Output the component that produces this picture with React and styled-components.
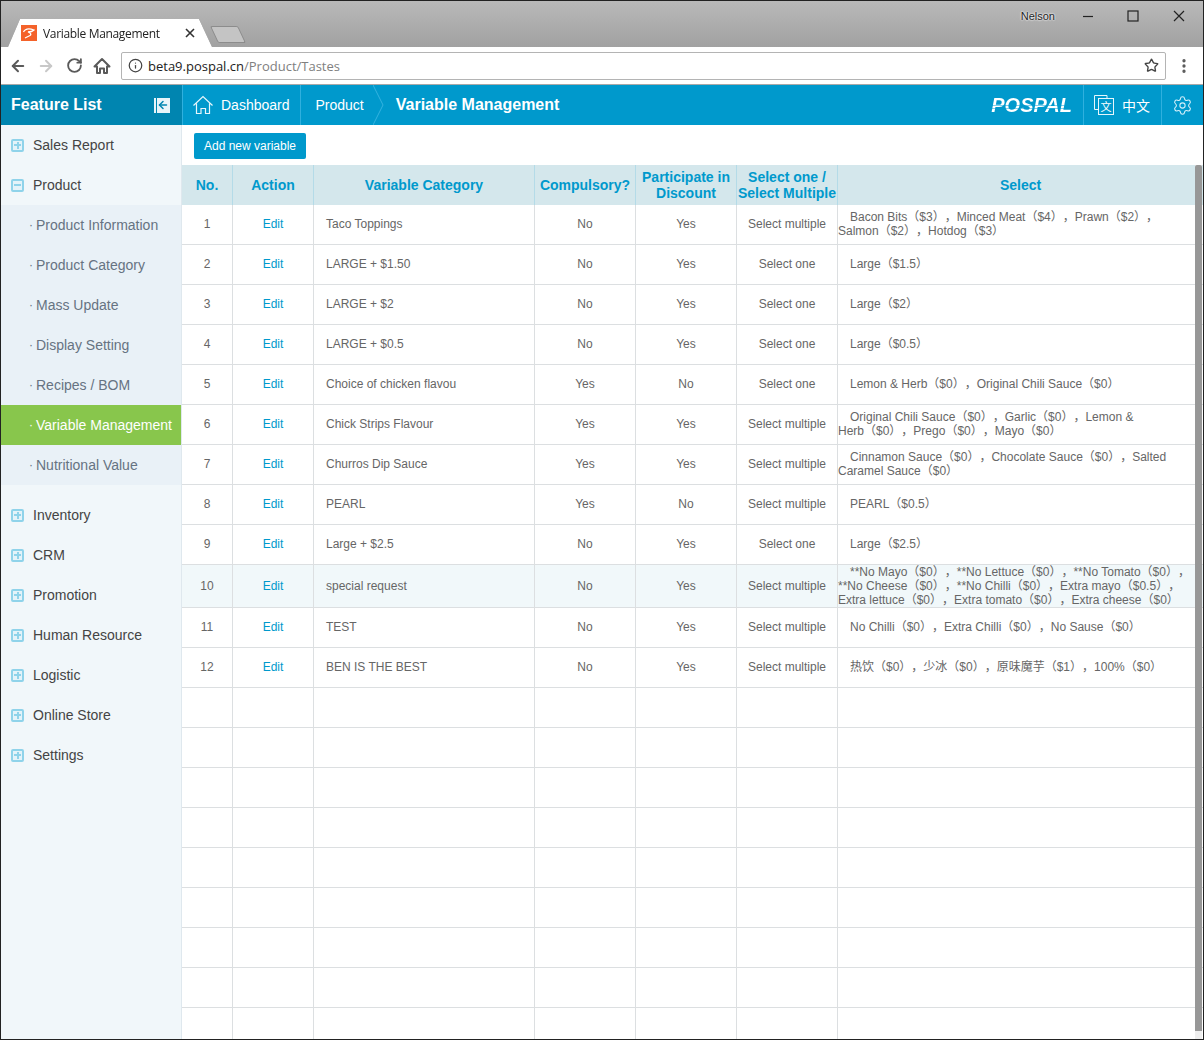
import React from 'react';
import styled, { createGlobalStyle } from 'styled-components';
import { ArrowLeft, ArrowRight, RotateCw, Info, Star, EllipsisVertical, Settings, ArrowLeft as BackArrow } from 'lucide-react';

const GlobalStyle = createGlobalStyle`
  html, body { margin: 0; padding: 0; background: #fff; }
  body { font-family: "Liberation Sans", "Noto Sans CJK SC", sans-serif; }
  * { box-sizing: border-box; }
`;

const Window = styled.div`
  height: 1040px;
  width: 1204px;
  border: 1px solid #222;
  display: flex;
  flex-direction: column;
  overflow: hidden;
`;

const TitleBar = styled.div`
  height: 46px;
  flex: none;
  background: linear-gradient(#b9b9b9, #a1a1a1);
  display: flex;
  align-items: flex-end;
  padding-left: 7px;
`;

const TabShadow = styled.div`
  filter: drop-shadow(0 0 0.6px #555);
`;

const Tab = styled.div`
  width: 204px;
  height: 28px;
  background: #fff;
  clip-path: polygon(0 100%, 12px 0, 191px 0, 204px 100%);
  display: flex;
  align-items: center;
  padding: 0 17px 0 13px;
  font-family: "Open Sans", sans-serif;
  font-size: 12px;
  color: #222;
  white-space: nowrap;
`;

const Favicon = styled.svg`
  width: 16px;
  height: 16px;
  margin-right: 6px;
  flex: none;
`;

const TabTitle = styled.span`
  flex: 1;
  letter-spacing: -0.33px;
`;

const NewTab = styled.div`
  width: 28px;
  height: 17px;
  margin: 0 0 4px 2px;
  background: #c4c4c4;
  border: 1px solid #8c8c8c;
  transform: skewX(25deg);
  border-radius: 2px;
`;

const WindowUser = styled.div`
  margin-left: auto;
  align-self: flex-start;
  display: flex;
  align-items: center;
  height: 30px;
  font-size: 11px;
  color: #222;
  text-shadow: 0 0 2px #fff, 0 0 2px #fff;
`;

const WindowButton = styled.svg`
  width: 12px;
  height: 12px;
  margin-left: ${p => p.$gap}px;
  margin-right: ${p => p.$end || 0}px;
  stroke: #222;
  stroke-width: 1.2;
  fill: none;
`;

const Toolbar = styled.div`
  height: 38px;
  flex: none;
  background: #fff;
  border-bottom: 1px solid #a8a8a8;
  display: flex;
  align-items: center;
  padding: 0 10px 0 3px;
`;

const NavIcon = styled.span`
  width: 28px;
  display: flex;
  justify-content: center;
  color: ${p => (p.$off ? '#c8c8c8' : '#5a5a5a')};
`;

const AddressBar = styled.div`
  margin-left: 5px;
  width: 1045px;
  height: 28px;
  border: 1px solid #b4b4b4;
  border-radius: 2px;
  display: flex;
  align-items: center;
  padding: 0 6px;
  font-family: "Open Sans", sans-serif;
  font-size: 13px;
  color: #222;
`;

const UrlPath = styled.span`
  color: #808080;
`;

const Url = styled.div`
  flex: 1;
  margin-left: 5px;
`;

const MenuButton = styled.span`
  margin-left: auto;
  display: flex;
  color: #5a5a5a;
`;

const AppHeader = styled.header`
  height: 40px;
  flex: none;
  background: #0099cc;
  color: #fff;
  display: flex;
  align-items: center;
`;

const FeatureTitle = styled.div`
  width: 182px;
  height: 100%;
  background: #0085b0;
  border-right: 1px solid #2fb0de;
  display: flex;
  align-items: center;
  justify-content: space-between;
  padding: 0 12px 0 10px;
  font-size: 16px;
  font-weight: bold;
`;

const CollapseBox = styled.span`
  width: 16px;
  height: 15px;
  background: #e8f4f9;
  border-left: 2px solid #e8f4f9;
  box-shadow: inset 1px 0 0 #0085b0;
  display: flex;
  align-items: center;
  justify-content: center;
  color: #0085b0;
`;

const Crumb = styled.div`
  height: 100%;
  display: flex;
  align-items: center;
  gap: 8px;
  font-size: 14px;
  padding: ${p => p.$pad};
  border-right: ${p => (p.$divider ? '1px solid #2fb0de' : 'none')};
`;

const CrumbChevron = styled.svg`
  width: 12px;
  height: 40px;
  margin-left: -1px;
  stroke: #35b3df;
  fill: none;
`;

const PageTitle = styled.div`
  margin-left: 11px;
  font-size: 16px;
  font-weight: bold;
`;

const Logo = styled.span`
  margin-left: auto;
  margin-right: 11px;
  font-family: "Liberation Sans", sans-serif;
  font-size: 20px;
  line-height: 16px;
  font-weight: bold;
  font-style: italic;
  background: linear-gradient(#fff 0 8px, #7fd0ec 8px 9px, #fff 9px 11px, #7fd0ec 11px 12px, #fff 12px);
  -webkit-background-clip: text;
  background-clip: text;
  color: transparent;
`;

const LangButton = styled.div`
  height: 100%;
  width: 79px;
  border-left: 1px solid #2fb0de;
  border-right: 1px solid #2fb0de;
  display: flex;
  align-items: center;
  gap: 8px;
  padding-left: 10px;
  font-size: 14px;
`;

const GearButton = styled.div`
  width: 41px;
  display: flex;
  justify-content: center;
  color: #d6f0fa;
`;

const Body = styled.div`
  flex: 1;
  display: flex;
  min-height: 0;
`;

const Sidebar = styled.aside`
  width: 181px;
  flex: none;
  background: #f1f7fa;
  border-right: 1px solid #dfe8ee;
`;

const MenuItem = styled.div`
  height: 40px;
  display: flex;
  align-items: center;
  gap: 9px;
  padding-left: 10px;
  margin-top: ${p => (p.$spaced ? '10px' : 0)};
  font-size: 14px;
  color: #444;
`;

const Toggle = styled.span`
  width: 13px;
  height: 13px;
  border: 2px solid #8fd3ea;
  border-radius: 2px;
  background: #e4f3f9;
  position: relative;
  &::before {
    content: '';
    position: absolute;
    left: 1px;
    right: 1px;
    top: 3.5px;
    height: 2px;
    background: #8fd3ea;
  }
  &::after {
    content: '';
    display: ${p => (p.$open ? 'none' : 'block')};
    position: absolute;
    top: 1px;
    bottom: 1px;
    left: 3.5px;
    width: 2px;
    background: #8fd3ea;
  }
`;

const SubMenu = styled.div`
  background: #e9f1f7;
`;

const SubItem = styled.div`
  height: 40px;
  width: ${p => (p.$active ? '180px' : 'auto')};
  display: flex;
  align-items: center;
  padding-left: 28px;
  font-size: 14px;
  white-space: nowrap;
  color: ${p => (p.$active ? '#fff' : '#667382')};
  background: ${p => (p.$active ? '#88c64c' : 'transparent')};
  &::before {
    content: '·';
    margin-right: 3px;
    font-size: 12px;
  }
`;

const Main = styled.main`
  flex: 1;
  min-width: 0;
  position: relative;
  overflow: hidden;
`;

const ActionBar = styled.div`
  height: 40px;
  padding: 8px 0 0 12px;
`;

const AddButton = styled.button`
  width: 112px;
  height: 26px;
  border: none;
  border-radius: 2px;
  background: #0099cc;
  color: #fff;
  font-family: inherit;
  font-size: 12px;
  padding: 0;
`;

const Table = styled.table`
  width: 1021px;
  table-layout: fixed;
  border-collapse: separate;
  border-spacing: 0;
`;

const Th = styled.th`
  height: 40px;
  padding: 0;
  background: #d4e7ec;
  border-right: 1px solid #b4dbe8;
  color: #0099cc;
  font-size: 14px;
  line-height: 16px;
  font-weight: bold;
  white-space: nowrap;
  &:last-child { border-right: none; }
`;

const Tr = styled.tr`
  height: ${p => (p.$tall ? '43px' : '40px')};
  background: ${p => (p.$hover ? '#f1f8fa' : '#fff')};
`;

const Td = styled.td`
  padding: ${p => (p.$left ? '0 0 1px 12px' : '0 0 1px')};
  border-right: 1px solid #dcdfe1;
  border-bottom: 1px solid #dcdfe1;
  color: #666;
  font-size: 12px;
  line-height: 14px;
  text-align: ${p => (p.$left ? 'left' : 'center')};
  &:last-child { border-right: none; }
  ${Tr}[data-tall] > & { padding-bottom: 0; }
`;

const EditLink = styled.a`
  color: #0099cc;
`;

const Options = styled.div`
  text-align: left;
  text-indent: 12px;
  line-height: 14px;
  padding-right: 8px;
  text-spacing-trim: space-all;
  font-family: "Liberation Sans", ${p => (p.$simplified ? '"Noto Sans CJK SC"' : '"Noto Sans CJK KR"')}, sans-serif;
`;

const ScrollTrack = styled.div`
  position: absolute;
  top: 40px;
  bottom: 0;
  right: 1px;
  width: 7px;
  background: #eee;
`;

const ScrollThumb = styled.div`
  height: 866px;
  background: #979797;
  border-radius: 2px 2px 0 0;
`;

const sections = ['Inventory', 'CRM', 'Promotion', 'Human Resource', 'Logistic', 'Online Store', 'Settings'];
const productItems = ['Product Information', 'Product Category', 'Mass Update', 'Display Setting', 'Recipes / BOM', 'Variable Management', 'Nutritional Value'];

const rows = [
  ['Taco Toppings', 'No', 'Yes', 'Select multiple', 'Bacon Bits（$3），Minced Meat（$4），Prawn（$2），Salmon（$2），Hotdog（$3）'],
  ['LARGE + $1.50', 'No', 'Yes', 'Select one', 'Large（$1.5）'],
  ['LARGE + $2', 'No', 'Yes', 'Select one', 'Large（$2）'],
  ['LARGE + $0.5', 'No', 'Yes', 'Select one', 'Large（$0.5）'],
  ['Choice of chicken flavou', 'Yes', 'No', 'Select one', 'Lemon & Herb（$0），Original Chili Sauce（$0）'],
  ['Chick Strips Flavour', 'Yes', 'Yes', 'Select multiple', 'Original Chili Sauce（$0），Garlic（$0），Lemon & Herb（$0），Prego（$0），Mayo（$0）'],
  ['Churros Dip Sauce', 'Yes', 'Yes', 'Select multiple', 'Cinnamon Sauce（$0），Chocolate Sauce（$0），Salted Caramel Sauce（$0）'],
  ['PEARL', 'Yes', 'No', 'Select multiple', 'PEARL（$0.5）'],
  ['Large + $2.5', 'No', 'Yes', 'Select one', 'Large（$2.5）'],
  ['special request', 'No', 'Yes', 'Select multiple', '**No Mayo（$0），**No Lettuce（$0），**No Tomato（$0），**No Cheese（$0），**No Chilli（$0），Extra mayo（$0.5），Extra lettuce（$0），Extra tomato（$0），Extra cheese（$0）'],
  ['TEST', 'No', 'Yes', 'Select multiple', 'No Chilli（$0），Extra Chilli（$0），No Sause（$0）'],
  ['BEN IS THE BEST', 'No', 'Yes', 'Select multiple', '热饮（$0），少冰（$0），原味魔芋（$1），100%（$0）'],
];

const widths = [51, 81, 221, 101, 101, 101, 365];

// keep a name and its price on one line, as the original wraps them
const noBreakPrice = text => text.replace(/（/g, '\u2060（');

const App = () => (
  <Window>
    <GlobalStyle />
    <TitleBar>
      <TabShadow>
        <Tab>
          <Favicon viewBox="0 0 16 16">
            <rect width="16" height="16" fill="#f4622a" />
            <path d="M2.5 7 C4 4 8 3 13 5 C11 7 9 7 7 7 C10 8 11 10 8 11 L4 13" fill="none" stroke="#fff" strokeWidth="1.3" />
          </Favicon>
          <TabTitle>Variable Management</TabTitle>
          <svg width="10" height="10" viewBox="0 0 10 10" stroke="#333" strokeWidth="1.6">
            <path d="M1 1 L9 9 M9 1 L1 9" />
          </svg>
        </Tab>
      </TabShadow>
      <NewTab />
      <WindowUser>
        Nelson
        <WindowButton $gap={27} viewBox="0 0 12 12"><path d="M1 6.5 H11" /></WindowButton>
        <WindowButton $gap={33} viewBox="0 0 12 12"><rect x="1" y="1" width="10" height="10" /></WindowButton>
        <WindowButton $gap={34} $end={18} viewBox="0 0 12 12"><path d="M1 1 L11 11 M11 1 L1 11" /></WindowButton>
      </WindowUser>
    </TitleBar>

    <Toolbar>
      <NavIcon><ArrowLeft size={18} strokeWidth={2.6} /></NavIcon>
      <NavIcon $off><ArrowRight size={18} strokeWidth={2.6} /></NavIcon>
      <NavIcon><RotateCw size={17} strokeWidth={2.6} /></NavIcon>
      <NavIcon>
        <svg width="18" height="18" viewBox="0 0 18 18" fill="none" stroke="currentColor" strokeWidth="2">
          <path d="M1.5 9.5 L9 2 L16.5 9.5 H14 V16 H11 V11.5 H7 V16 H4 V9.5 Z" strokeLinejoin="round" />
        </svg>
      </NavIcon>
      <AddressBar>
        <Info size={15} color="#444" strokeWidth={2} />
        <Url>beta9.pospal.cn<UrlPath>/Product/Tastes</UrlPath></Url>
        <Star size={15} color="#444" strokeWidth={2.2} />
      </AddressBar>
      <MenuButton><EllipsisVertical size={18} strokeWidth={2.4} /></MenuButton>
    </Toolbar>

    <AppHeader>
      <FeatureTitle>
        Feature List
        <CollapseBox><BackArrow size={12} strokeWidth={3} /></CollapseBox>
      </FeatureTitle>
      <Crumb $pad="0 10px" $divider>
        <svg width="20" height="20" viewBox="0 0 20 20" fill="none" stroke="#e6f6fc" strokeWidth="1.2">
          <path d="M0.5 10.5 L10 1.5 L19.5 10.5 M3.5 8.5 V18.5 H8 V13.5 H12.5 V18.5 H16.5 V8.5" />
        </svg>
        Dashboard
      </Crumb>
      <Crumb $pad="0 10px 0 15px">Product</Crumb>
      <CrumbChevron viewBox="0 0 12 40"><path d="M0 0 L10 20 L0 40" /></CrumbChevron>
      <PageTitle>Variable Management</PageTitle>
      <Logo>POSPAL</Logo>
      <LangButton>
        <svg width="20" height="20" viewBox="0 0 20 20" fill="none" stroke="#e6f6fc" strokeWidth="1">
          <path d="M13 3 V0.5 H0.5 V14.5 H4" />
          <rect x="4.5" y="3.5" width="15" height="16" fill="#0099cc" />
          <text x="12" y="16" textAnchor="middle" fontSize="11" fill="#fff" stroke="none" fontFamily="Noto Sans CJK SC">文</text>
        </svg>
        中文
      </LangButton>
      <GearButton><Settings size={21} strokeWidth={1.2} /></GearButton>
    </AppHeader>

    <Body>
      <Sidebar>
        <MenuItem><Toggle />Sales Report</MenuItem>
        <MenuItem><Toggle $open />Product</MenuItem>
        <SubMenu>
          {productItems.map(name => (
            <SubItem key={name} $active={name === 'Variable Management'}>{name}</SubItem>
          ))}
        </SubMenu>
        {sections.map((name, i) => (
          <MenuItem key={name} $spaced={i === 0}><Toggle />{name}</MenuItem>
        ))}
      </Sidebar>

      <Main>
        <ActionBar><AddButton>Add new variable</AddButton></ActionBar>
        <Table>
          <colgroup>
            {widths.map((w, i) => <col key={i} width={w} />)}
          </colgroup>
          <thead>
            <tr>
              <Th>No.</Th>
              <Th>Action</Th>
              <Th>Variable Category</Th>
              <Th>Compulsory?</Th>
              <Th>Participate in<br />Discount</Th>
              <Th>Select one /<br />Select Multiple</Th>
              <Th>Select</Th>
            </tr>
          </thead>
          <tbody>
            {rows.map((row, i) => (
              <Tr key={i} $tall={i === 9} $hover={i === 9} data-tall={i === 9 ? '' : undefined}>
                <Td>{i + 1}</Td>
                <Td><EditLink>Edit</EditLink></Td>
                <Td $left>{row[0]}</Td>
                <Td>{row[1]}</Td>
                <Td>{row[2]}</Td>
                <Td>{row[3]}</Td>
                <Td><Options $simplified={i === 11}>{noBreakPrice(row[4])}</Options></Td>
              </Tr>
            ))}
            {Array.from({ length: 9 }, (_, i) => (
              <Tr key={i}>
                {widths.map((w, j) => <Td key={j} />)}
              </Tr>
            ))}
          </tbody>
        </Table>
        <ScrollTrack><ScrollThumb /></ScrollTrack>
      </Main>
    </Body>
  </Window>
);

export default App;
